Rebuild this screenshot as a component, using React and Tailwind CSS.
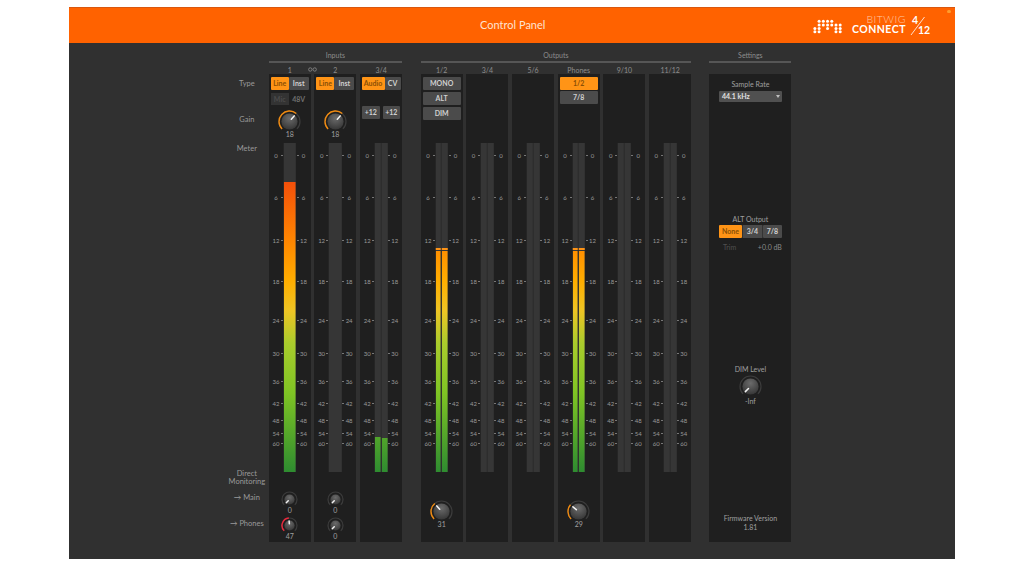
const SCALE = [
  [0, 12], [6, 54], [12, 97], [18, 138], [24, 177], [30, 210],
  [36, 238], [42, 260], [48, 277], [54, 290], [60, 300],
];

const METER_H = 329;

const Knob = ({ size = 23, angle = -135, color = '#f08a10' }) => {
  const c = size / 2;
  const r = size / 2 - 1;
  const inner = size / 2 - 3.4;
  const pt = (a, rad) => {
    const t = ((a - 90) * Math.PI) / 180;
    return [c + rad * Math.cos(t), c + rad * Math.sin(t)];
  };
  const arc = (from, to) => {
    const [x1, y1] = pt(from, r);
    const [x2, y2] = pt(to, r);
    return `M${x1} ${y1} A${r} ${r} 0 ${to - from > 180 ? 1 : 0} 1 ${x2} ${y2}`;
  };
  const [px1, py1] = pt(angle, inner * 0.35);
  const [px2, py2] = pt(angle, inner * 0.9);
  return (
    <svg width={size} height={size} viewBox={`0 0 ${size} ${size}`} className="block">
      <defs>
        <radialGradient id="knobFace" cx="50%" cy="30%" r="75%">
          <stop offset="0%" stopColor="#6b6b6b" />
          <stop offset="100%" stopColor="#333333" />
        </radialGradient>
      </defs>
      <path d={arc(-135, 135)} fill="none" stroke="#3c3c3c" strokeWidth="1.2" />
      {angle > -135 && <path d={arc(-135, angle)} fill="none" stroke={color} strokeWidth="1.4" />}
      <circle cx={c} cy={c} r={inner} fill="url(#knobFace)" />
      <line x1={px1} y1={py1} x2={px2} y2={py2} stroke="#f2f2f2" strokeWidth="1.5" strokeLinecap="round" />
    </svg>
  );
};

const Btn = ({ children, on, className = '' }) => (
  <div
    className={`flex items-center justify-center rounded-[1px] text-[7px] font-bold ${
      on ? 'bg-[#ff9416] text-[#8a4f05]' : 'bg-[#4b4b4b] text-[#d0d0d0]'
    } ${className}`}
  >
    {children}
  </div>
);

const Meter = ({ stereo, level = 0, levelR, peak }) => {
  const right = levelR ?? level;
  const Fill = ({ h }) => (
    <div className="absolute bottom-0 left-0 right-0 overflow-hidden" style={{ height: h }}>
      <div className="absolute bottom-0 left-0 right-0 h-[329px] bg-[linear-gradient(to_bottom,#f23c08_0%,#f4500a_12%,#ff8a00_31%,#ffae00_42%,#eec524_51%,#a9cc2c_61%,#7fc424_76%,#2e8c30_100%)]" />
    </div>
  );
  const Peak = () => <div className="absolute left-0 right-0 h-[2px] bg-[#ff9416]" style={{ bottom: peak }} />;
  return (
    <div className="relative w-full shrink-0" style={{ height: METER_H }}>
      <div className="absolute inset-y-0 left-1/2 flex w-[12.5px] -translate-x-1/2 gap-[1px] bg-[#2b2b2b]">
        {stereo ? (
          <>
            <div className="relative flex-1 bg-[#363636]">
              {level > 0 && <Fill h={level} />}
              {peak && <Peak />}
            </div>
            <div className="relative flex-1 bg-[#363636]">
              {right > 0 && <Fill h={right} />}
              {peak && <Peak />}
            </div>
          </>
        ) : (
          <div className="relative flex-1 bg-[#363636]">{level > 0 && <Fill h={level} />}</div>
        )}
      </div>
      {SCALE.map(([db, y]) => (
        <div
          key={db}
          className="absolute inset-x-0 flex h-[8px] -translate-y-1/2 items-center text-[6px] text-[#999999]"
          style={{ top: y }}
        >
          <span className="w-[14.5px] text-center">{db}</span>
          <span className="ml-[-2.5px] h-[1px] w-[2px] bg-[#777777]" />
          <span className="flex-1" />
          <span className="mr-[-2.5px] h-[1px] w-[2px] bg-[#777777]" />
          <span className="w-[14.5px] text-center">{db}</span>
        </div>
      ))}
    </div>
  );
};

const Strip = ({ top, meter, bottom }) => (
  <div className="flex h-[468px] w-[42px] flex-col bg-[#1f1f1f]">
    <div className="h-[69px] shrink-0">{top}</div>
    {meter}
    <div className="flex-1">{bottom}</div>
  </div>
);

const Section = ({ title, className = '', children, labels }) => (
  <div className={`flex flex-col ${className}`}>
    <div className="h-[18px] pt-[8px] text-center text-[7px] leading-[8px] text-[#8d8d8d]">{title}</div>
    <div className="h-[2px] bg-[#565656]" />
    {labels ? (
      <div className="flex h-[11px] gap-[3.7px]">
        {labels.map((l) => (
          <div key={l} className="w-[42px] pt-[3px] text-center text-[7px] leading-[8px] text-[#8d8d8d]">{l}</div>
        ))}
      </div>
    ) : (
      <div className="h-[11px]" />
    )}
    {children}
  </div>
);

const GainTop = ({ angle = 40 }) => (
  <div className="flex flex-col items-center pt-[3px]">
    <div className="flex h-[13px] w-[38px]">
      <Btn on className="w-[18px]">Line</Btn>
      <Btn className="flex-1">Inst</Btn>
    </div>
    <div className="mt-[19.5px]">
      <Knob angle={angle} />
    </div>
  </div>
);

const Value = ({ children, className = '' }) => (
  <div className={`text-center text-[7px] leading-[8px] text-[#a0a0a0] ${className}`}>{children}</div>
);

const MonitorKnobs = ({ phones = -135, value = 0 }) => (
  <div className="flex flex-col items-center pt-[18.5px]">
    <Knob size={17} />
    <Value className="mt-[-1.5px]">0</Value>
    <div className="mt-[2.5px]">
      <Knob size={17} angle={phones} color="#e8283c" />
    </div>
    <Value className="mt-[-1.5px]">{value}</Value>
  </div>
);

const OutKnob = ({ value, angle }) => (
  <div className="flex flex-col items-center pt-[27.5px]">
    <Knob angle={angle} />
    <Value className="mt-[-2.5px]">{value}</Value>
  </div>
);

const Label = ({ children, className = '' }) => (
  <div className={`text-center text-[7.5px] leading-[8px] text-[#9a9a9a] ${className}`}>{children}</div>
);

export default function App() {
  return (
    <div className="h-[565px] w-[1024px] overflow-hidden bg-white pl-[69px] pt-[6.5px] font-['Lato',sans-serif] antialiased">
      <div className="flex h-[552.5px] w-[885.5px] flex-col bg-[#303030]">
        {/* Header */}
        <div className="relative flex h-[36.5px] shrink-0 items-center border-t border-[#d9570f] bg-[#ff6200]">
          <div className="w-full pl-[2px] text-center text-[11px] text-[#ffe3d0]">Control Panel</div>
          <svg width="30" height="15" viewBox="0 0 31 16" className="absolute left-[743.5px] top-[11.5px]">
            <g fill="#ffffff">
              {[6, 10.5, 15, 19.5].map((x) => <circle key={x} cx={x} cy="2.5" r="1.6" />)}
              {[6, 10.5, 15, 19.5, 24, 28.5].map((x) => <circle key={x} cx={x} cy="6.5" r="1.6" />)}
              {[1.5, 6, 15, 24, 28.5].map((x) => <circle key={x} cx={x} cy="10" r="1.6" />)}
              {[1.5, 6, 24, 28.5].map((x) => <circle key={x} cx={x} cy="13.5" r="1.6" />)}
            </g>
          </svg>
          <div className="absolute left-[777px] top-[6.5px] w-[60px] text-right">
            <div className="text-[10.5px] font-light leading-[10px] tracking-[0.5px] text-[#ffc9a8]">BITWIG</div>
            <div className="text-[10.5px] font-bold leading-[10px] tracking-[0.5px] text-white">CONNECT</div>
          </div>
          <div className="absolute left-[841px] top-[7px] h-[22px] w-[20px] text-[10.5px] font-bold leading-[11px] text-white">
            <div className="absolute left-[2px] top-0">4</div>
            <div className="absolute left-[8px] top-[10px]">12</div>
            <svg width="20" height="22" viewBox="0 0 20 22" className="absolute left-0 top-0">
              <line x1="1" y1="20" x2="14.5" y2="2" stroke="#ffffff" strokeWidth="0.8" />
            </svg>
          </div>
          <div className="absolute right-[4px] top-[2px] h-[3.5px] w-[3.5px] rounded-full bg-[#ff9d2e]" />
        </div>

        {/* Body */}
        <div className="flex pl-[157px]">
          {/* Row labels */}
          <div className="flex w-[42.7px] flex-col pr-[1px] pt-[37px]">
            <Label>Type</Label>
            <Label className="mt-[27.5px]">Gain</Label>
            <Label className="mt-[21px]">Meter</Label>
            <Label className="mt-[317px]">
              Direct
              <br />
              Monitoring
            </Label>
            <Label className="mt-[8px]">→ Main</Label>
            <Label className="mt-[18px]">→ Phones</Label>
          </div>

          {/* Inputs */}
          <div className="relative">
            <Section title="Inputs" labels={['1', '2', '3/4']}>
              <div className="flex gap-[3.7px]">
                <Strip
                  top={
                    <div className="relative h-full">
                      <GainTop />
                      <div className="absolute left-[2px] top-[19px] flex h-[12px] w-[38px] items-center text-[7px] font-bold">
                        <div className="flex h-full w-[18px] items-center justify-center bg-[#333333] text-[#4c4c4c]">Mic</div>
                        <div className="flex-1 text-center text-[#6f6f6f]">48V</div>
                      </div>
                      <Value className="absolute inset-x-0 top-[56px]">18</Value>
                    </div>
                  }
                  meter={<Meter level={290} />}
                  bottom={<MonitorKnobs phones={-5} value={47} />}
                />
                <Strip
                  top={
                    <div className="relative h-full">
                      <GainTop />
                      <Value className="absolute inset-x-0 top-[56px]">18</Value>
                    </div>
                  }
                  meter={<Meter />}
                  bottom={<MonitorKnobs />}
                />
                <Strip
                  top={
                    <div className="flex flex-col items-center pt-[3px]">
                      <div className="flex h-[13px] w-[39px]">
                        <Btn on className="w-[23px]">Audio</Btn>
                        <Btn className="flex-1">CV</Btn>
                      </div>
                      <div className="mt-[16px] flex w-[38px] justify-between">
                        <Btn className="h-[13px] w-[17.5px]">+12</Btn>
                        <Btn className="h-[13px] w-[17.5px]">+12</Btn>
                      </div>
                    </div>
                  }
                  meter={<Meter stereo level={35} levelR={34} />}
                />
              </div>
            </Section>
            <svg width="9" height="5" viewBox="0 0 9 5" className="absolute left-[39px] top-[23.5px]">
              <circle cx="2.3" cy="2.5" r="1.7" fill="none" stroke="#8d8d8d" strokeWidth="0.8" />
              <circle cx="6.7" cy="2.5" r="1.7" fill="none" stroke="#8d8d8d" strokeWidth="0.8" />
            </svg>
          </div>

          {/* Outputs */}
          <Section title="Outputs" className="ml-[18.6px]" labels={['1/2', '3/4', '5/6', 'Phones', '9/10', '11/12']}>
            <div className="flex gap-[3.7px]">
              <Strip
                top={
                  <div className="flex flex-col items-center gap-[2px] pt-[3px]">
                    <Btn className="h-[13px] w-[38px]">MONO</Btn>
                    <Btn className="h-[13px] w-[38px]">ALT</Btn>
                    <Btn className="h-[13px] w-[38px]">DIM</Btn>
                  </div>
                }
                meter={<Meter stereo level={221} peak={222} />}
                bottom={<OutKnob value={31} angle={-40} />}
              />
              <Strip meter={<Meter stereo />} />
              <Strip meter={<Meter stereo />} />
              <Strip
                top={
                  <div className="flex flex-col items-center gap-[1px] pt-[3px]">
                    <Btn on className="h-[13px] w-[38px]">1/2</Btn>
                    <Btn className="h-[13px] w-[38px]">7/8</Btn>
                  </div>
                }
                meter={<Meter stereo level={221} peak={222} />}
                bottom={<OutKnob value={29} angle={-50} />}
              />
              <Strip meter={<Meter stereo />} />
              <Strip meter={<Meter stereo />} />
            </div>
          </Section>

          {/* Settings */}
          <Section title="Settings" className="ml-[18.3px] w-[82px]">
            <div className="flex h-[468px] flex-col items-center bg-[#1f1f1f]">
              <Value className="mt-[6px] text-[7.5px]">Sample Rate</Value>
              <div className="relative mt-[3px] flex h-[11px] w-[63px] items-center rounded-[1px] bg-[#505050] pl-[3px] text-[7px] font-bold text-[#e0e0e0]">
                44.1 kHz
                <span className="absolute right-[2px] top-[4px] h-0 w-0 border-x-[2px] border-t-[3px] border-x-transparent border-t-[#c0c0c0]" />
              </div>
              <Value className="mt-[113px] text-[7.5px]">ALT Output</Value>
              <div className="mt-[2px] flex h-[13px] w-[63px]">
                <Btn on className="w-[23px]">None</Btn>
                <Btn className="flex-1 border-x border-[#333333]">3/4</Btn>
                <Btn className="flex-1">7/8</Btn>
              </div>
              <div className="mt-[5px] flex w-[63px] justify-between pl-[4px] text-[7px] leading-[8px]">
                <span className="text-[#4f4f4f]">Trim</span>
                <span className="text-[#8a8a8a]">+0.0 dB</span>
              </div>
              <Value className="mt-[114px] text-[7.5px]">DIM Level</Value>
              <div className="mt-[2px]">
                <Knob />
              </div>
              <Value className="mt-[-1px]">-Inf</Value>
              <Value className="mt-[109px] text-[7.5px]">Firmware Version</Value>
              <Value className="mt-[1px]">1.81</Value>
            </div>
          </Section>
        </div>
      </div>
    </div>
  );
}
